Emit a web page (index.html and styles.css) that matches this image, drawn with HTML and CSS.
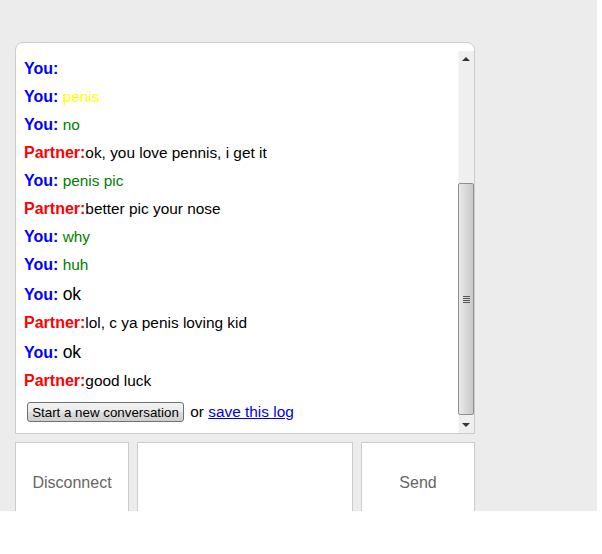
FILE: index.html
```html
<!DOCTYPE html>
<html>
<head>
<meta charset="utf-8">
<link rel="stylesheet" href="styles.css">
</head>
<body>
<div class="page">
  <div class="logbox">
    <div class="log">
      <div class="line"><strong class="you">You:</strong></div>
      <div class="line"><strong class="you">You:</strong> <span class="yellow">penis</span></div>
      <div class="line"><strong class="you">You:</strong> <span class="green">no</span></div>
      <div class="line"><strong class="partner">Partner:</strong><span>ok, you love pennis, i get it</span></div>
      <div class="line"><strong class="you">You:</strong> <span class="green">penis pic</span></div>
      <div class="line"><strong class="partner">Partner:</strong><span>better pic your nose</span></div>
      <div class="line"><strong class="you">You:</strong> <span class="green">why</span></div>
      <div class="line"><strong class="you">You:</strong> <span class="green">huh</span></div>
      <div class="line big"><strong class="you">You:</strong> <span class="large">ok</span></div>
      <div class="line"><strong class="partner">Partner:</strong><span>lol, c ya penis loving kid</span></div>
      <div class="line big"><strong class="you">You:</strong> <span class="large">ok</span></div>
      <div class="line"><strong class="partner">Partner:</strong><span>good luck</span></div>
      <div class="actions"><button class="newconv">Start a new conversation</button> or <a href="#" class="savelog">save this log</a></div>
    </div>
    <div class="scrollbar">
      <div class="arrow"><span class="tri-up"></span></div>
      <div class="track"><div class="thumb"><span class="grip"></span></div></div>
      <div class="arrow"><span class="tri-down"></span></div>
    </div>
  </div>
  <div class="controls">
    <div class="ctrl">Disconnect</div>
    <div class="input"></div>
    <div class="ctrl">Send</div>
  </div>
</div>
</body>
</html>
```

FILE: styles.css
```css
html, body {
  margin: 0;
  padding: 0;
  background: #ffffff;
}

.page {
  width: 597px;
  height: 511px;
  background: #ececec;
  box-sizing: border-box;
  padding: 42px 0 0 15px;
  overflow: hidden;
  font-family: "Liberation Sans", Arial, sans-serif;
}

.logbox {
  width: 460px;
  height: 392px;
  box-sizing: border-box;
  border: 1px solid #cccccc;
  border-radius: 8px 8px 0 0;
  background: #ffffff;
  display: flex;
}

.log {
  flex: 1;
  padding: 12px 0 0 8px;
}

.line {
  height: 28px;
  line-height: 28px;
  font-size: 15.4px;
  color: #000000;
  white-space: nowrap;
}

.line.big {
  height: 30px;
  line-height: 30px;
}

.line strong {
  font-size: 16px;
  font-weight: bold;
}

.you { color: #0000ff; }
.partner { color: #ff0000; }
.yellow { color: #ffff00; }
.green { color: #008000; }
.large { font-size: 17.5px; color: #000000; }

.actions {
  margin-top: 7px;
  font-size: 15.4px;
  line-height: 20px;
  display: flex;
  align-items: center;
  white-space: pre;
}

.newconv {
  margin: 0 2px 0 3px;
  width: 157px;
  height: 20px;
  padding: 0 4px;
  box-sizing: border-box;
  font-family: "Liberation Sans", Arial, sans-serif;
  font-size: 13.33px;
  color: #000000;
  border: 1px solid #707070;
  border-radius: 3px;
  background: linear-gradient(#f2f2f2, #ebebeb 50%, #dddddd 50%, #cfcfcf);
}

.savelog {
  color: #0000ee;
  text-decoration: underline;
}

.scrollbar {
  width: 16px;
  margin-top: 8px;
  display: flex;
  flex-direction: column;
  background: #efefef;
  box-shadow: inset 1px 0 0 #f6f6f6;
}

.arrow {
  height: 16px;
  display: flex;
  align-items: center;
  justify-content: center;
}

.tri-up {
  width: 0;
  height: 0;
  border-left: 4px solid transparent;
  border-right: 4px solid transparent;
  border-bottom: 4px solid #333333;
}

.tri-down {
  width: 0;
  height: 0;
  border-left: 4px solid transparent;
  border-right: 4px solid transparent;
  border-top: 4px solid #333333;
}

.track {
  flex: 1;
}

.thumb {
  margin-top: 116px;
  height: 232px;
  box-sizing: border-box;
  border: 1px solid #8e8f8f;
  border-radius: 2px;
  background: linear-gradient(to right, #eaeaea, #dcdcdc 40%, #c9c9cd);
  display: flex;
  align-items: center;
  justify-content: center;
}

.grip {
  width: 7px;
  height: 7px;
  background: repeating-linear-gradient(#555555 0, #555555 1px, transparent 1px, transparent 2px);
}

.controls {
  margin-top: 8px;
  display: flex;
  gap: 8px;
  width: 460px;
}

.ctrl {
  width: 114px;
  height: 82px;
  box-sizing: border-box;
  border: 1px solid #cccccc;
  background: #ffffff;
  display: flex;
  align-items: center;
  justify-content: center;
  font-size: 16px;
  color: #666666;
}

.input {
  width: 216px;
  height: 82px;
  box-sizing: border-box;
  border: 1px solid #cccccc;
  background: #ffffff;
}
```
